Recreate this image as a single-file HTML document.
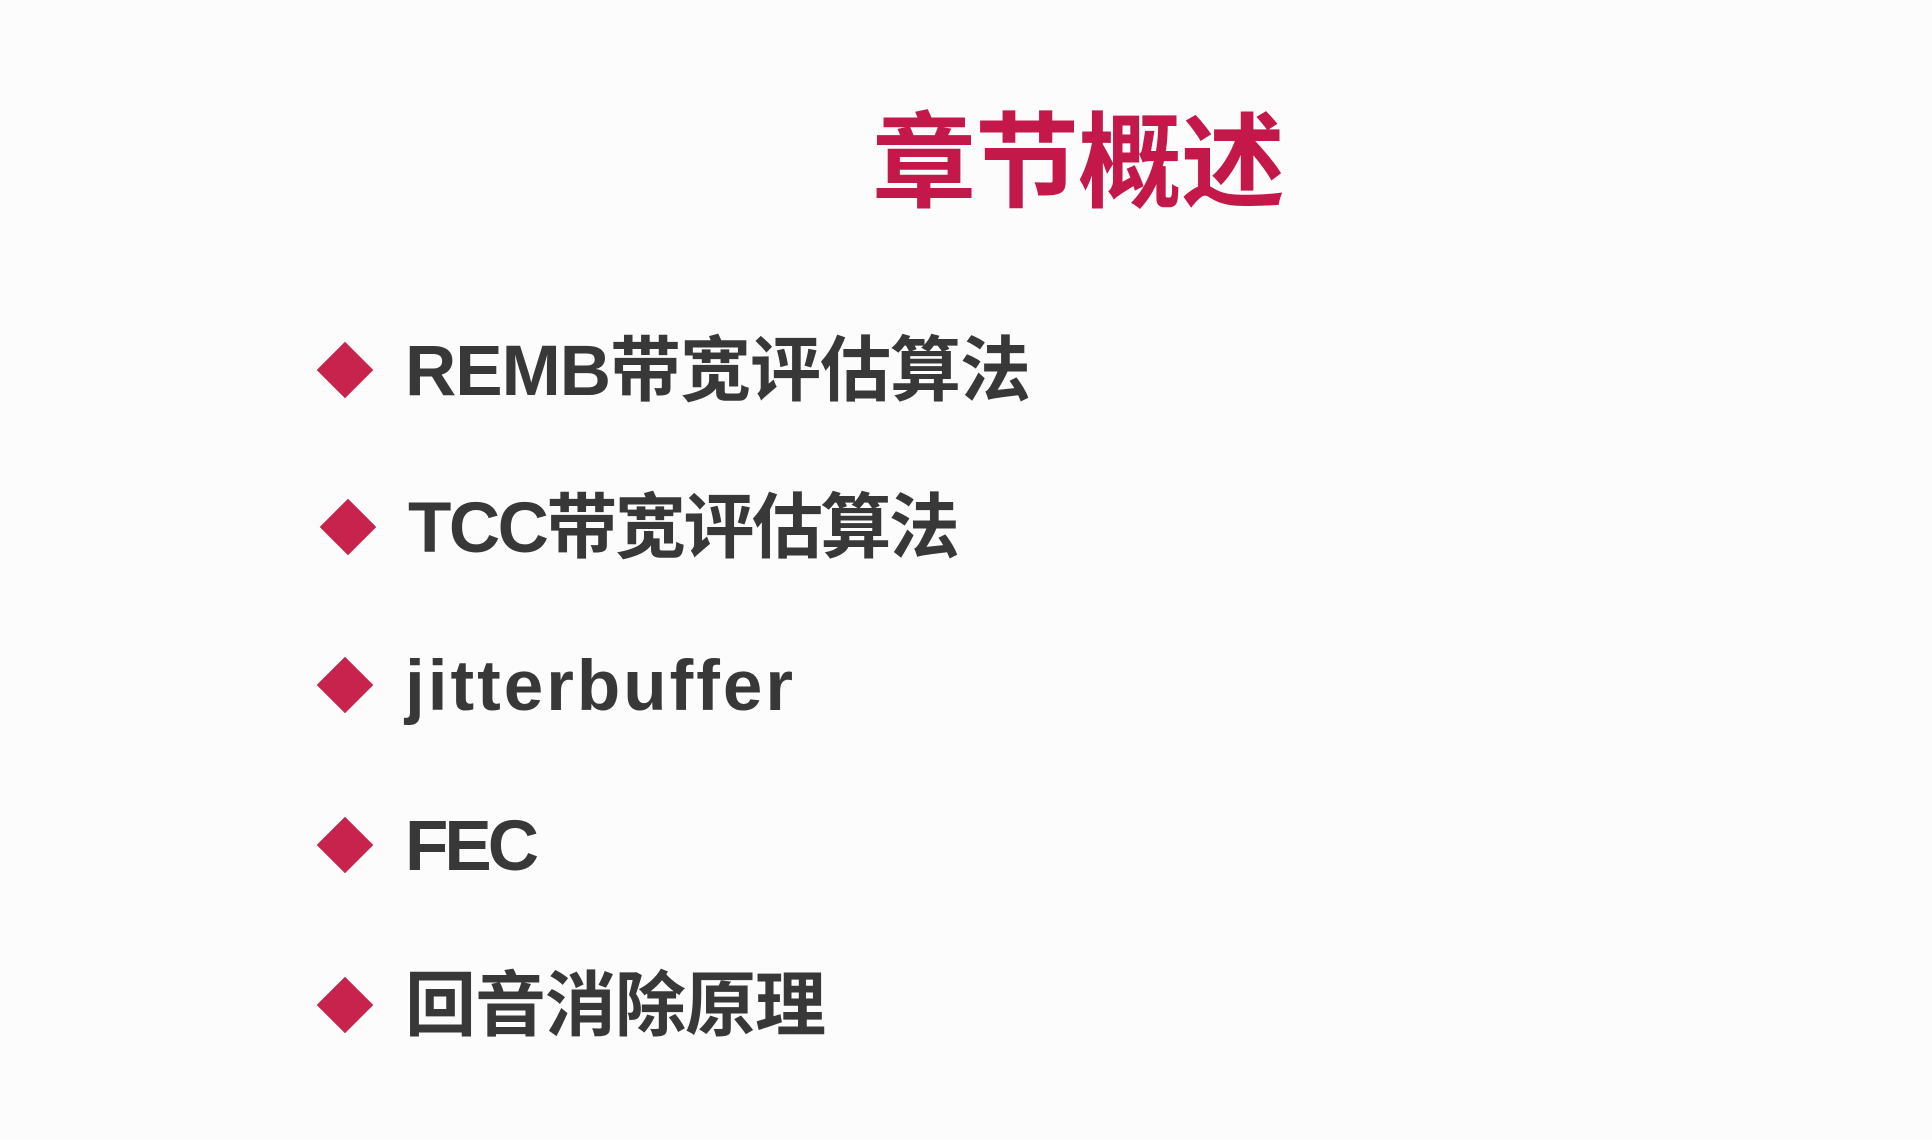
<!DOCTYPE html>
<html><head><meta charset="utf-8"><style>
html,body{margin:0;padding:0}
body{width:1932px;height:1140px;background:#fcfcfc;position:relative;overflow:hidden;font-family:"Liberation Sans","Noto Sans CJK SC",sans-serif;font-weight:bold}
.t{position:absolute;left:872px;top:110px;font-size:104px;line-height:108px;color:#c4184a;white-space:nowrap;letter-spacing:-1px}
.d{position:absolute;width:40px;height:40px;background:#c8234d;transform:rotate(45deg)}
.l{position:absolute;left:405px;font-size:71px;line-height:90px;color:#383838;white-space:nowrap;letter-spacing:-1px}
</style></head><body>
<div class="t">章节概述</div>
<div class="d" style="left:325px;top:350px"></div><div class="l" style="top:327px">REMB带宽评估算法</div>
<div class="d" style="left:328px;top:507px"></div><div class="l" style="top:484px;left:408px;letter-spacing:-2.5px">TCC带宽评估算法</div>
<div class="d" style="left:325px;top:665px"></div><div class="l" style="top:642px;letter-spacing:3px">jitterbuffer</div>
<div class="d" style="left:325px;top:825px"></div><div class="l" style="top:802px;letter-spacing:-4px">FEC</div>
<div class="d" style="left:325px;top:985px"></div><div class="l" style="top:962px">回音消除原理</div>
</body></html>
